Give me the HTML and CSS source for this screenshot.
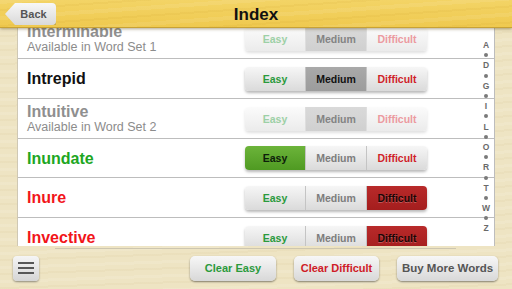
FILE: index.html
```html
<!DOCTYPE html>
<html>
<head>
<meta charset="utf-8">
<link rel="stylesheet" href="styles.css">
</head>
<body>
<div class="app">
  <header class="topbar">
    <div class="back"><span>Back</span></div>
    <h1 class="title">Index</h1>
  </header>
  <main class="main">
    <div class="panel">
      <ul class="list">
        <li class="row disabled">
          <div class="label"><div class="word">Interminable</div><div class="sub">Available in Word Set 1</div></div>
          <div class="seg"><span class="s easy">Easy</span><span class="s med on">Medium</span><span class="s diff">Difficult</span></div>
        </li>
        <li class="row">
          <div class="label"><div class="word">Intrepid</div></div>
          <div class="seg"><span class="s easy">Easy</span><span class="s med on">Medium</span><span class="s diff">Difficult</span></div>
        </li>
        <li class="row disabled">
          <div class="label"><div class="word">Intuitive</div><div class="sub">Available in Word Set 2</div></div>
          <div class="seg"><span class="s easy">Easy</span><span class="s med on">Medium</span><span class="s diff">Difficult</span></div>
        </li>
        <li class="row">
          <div class="label"><div class="word green">Inundate</div></div>
          <div class="seg"><span class="s easy on">Easy</span><span class="s med">Medium</span><span class="s diff">Difficult</span></div>
        </li>
        <li class="row">
          <div class="label"><div class="word red">Inure</div></div>
          <div class="seg"><span class="s easy">Easy</span><span class="s med">Medium</span><span class="s diff on">Difficult</span></div>
        </li>
        <li class="row">
          <div class="label"><div class="word red">Invective</div></div>
          <div class="seg"><span class="s easy">Easy</span><span class="s med">Medium</span><span class="s diff on">Difficult</span></div>
        </li>
      </ul>
      <div class="index">
        <span>A</span><i></i><span>D</span><i></i><span>G</span><i></i><span>I</span><i></i><span>L</span><i></i><span>O</span><i></i><span>R</span><i></i><span>T</span><i></i><span>W</span><i></i><span>Z</span>
      </div>
    </div>
  </main>
  <footer class="toolbar">
    <div class="menu"><i></i><i></i><i></i></div>
    <div class="actions">
      <div class="btn clear-easy">Clear Easy</div>
      <div class="btn clear-diff">Clear Difficult</div>
      <div class="btn buy">Buy More Words</div>
    </div>
  </footer>
</div>
</body>
</html>
```
FILE: styles.css
```css
* { box-sizing: border-box; }
html, body { margin: 0; padding: 0; }
body {
  width: 512px;
  height: 289px;
  overflow: hidden;
  font-family: "Liberation Sans", Arial, sans-serif;
  background: #ede3c2;
}
.app {
  position: relative;
  width: 512px;
  height: 289px;
  display: flex;
  flex-direction: column;
  background:
    repeating-linear-gradient(178deg, rgba(255,255,255,0.10) 0 3px, rgba(0,0,0,0.0) 3px 7px, rgba(180,150,80,0.06) 7px 9px, rgba(0,0,0,0) 9px 14px),
    #eee4c3;
}
.topbar {
  position: relative;
  z-index: 2;
  height: 28px;
  flex: none;
  display: flex;
  align-items: center;
  justify-content: center;
  background:
    repeating-linear-gradient(176deg, rgba(255,255,255,0.08) 0 4px, rgba(0,0,0,0) 4px 9px, rgba(190,140,20,0.08) 9px 11px, rgba(0,0,0,0) 11px 16px),
    linear-gradient(#f3d466, #efc94f);
  border-bottom: 1px solid #c8a235;
  box-shadow: 0 1px 3px rgba(80,60,0,0.45);
}
.title {
  margin: 0;
  font-size: 17px;
  font-weight: bold;
  color: #111;
  line-height: 20px;
  padding-top: 2px;
}
.back {
  position: absolute;
  left: 5px;
  top: 3px;
  width: 51px;
  height: 22px;
  display: flex;
  align-items: center;
  justify-content: center;
  padding-left: 6px;
  background: linear-gradient(#f7f7f7, #d9d9d9);
  border-radius: 4px;
  clip-path: polygon(10px 0, 100% 0, 100% 100%, 10px 100%, 0 50%);
  box-shadow: 0 1px 2px rgba(0,0,0,0.4);
}
.back span {
  font-size: 11px;
  font-weight: bold;
  color: #555;
}
.main {
  flex: none;
  height: 218px;
  padding: 0 17px 0 17px;
  position: relative;
}
.panel {
  position: relative;
  height: 218px;
  background: #fff;
  border-left: 1px solid #cfc8b4;
  border-right: 1px solid #bdbdbd;
  overflow: hidden;
}
.list {
  list-style: none;
  margin: -9px 0 0 0;
  padding: 0;
}
.row {
  height: 40px;
  display: flex;
  align-items: center;
  padding-left: 9px;
  border-bottom: 1px solid #bdbdbd;
}
.row:nth-child(4) { height: 39px; }
.label { width: 218px; flex: none; }
.word {
  font-size: 16px;
  font-weight: bold;
  line-height: 17px;
  color: #111;
}
.sub {
  font-size: 12.5px;
  line-height: 15px;
  color: #8c8c8c;
}
.disabled .word { color: #8f8f8f; }
.word.green { color: #20a61f; }
.word.red { color: #f2151a; }
.seg {
  display: flex;
  width: 182px;
  height: 24px;
  border-radius: 4px;
  overflow: hidden;
  box-shadow: 0 2px 3px rgba(0,0,0,0.28);
}
.s {
  flex: 1;
  display: flex;
  align-items: center;
  justify-content: center;
  font-size: 10.5px;
  font-weight: bold;
  background: linear-gradient(#f6f6f6, #dadada);
  border-left: 1px solid #c4c4c4;
}
.s:first-child { border-left: none; }
.s.easy { color: #2b9a3c; }
.s.med { color: #7d7d7d; }
.s.diff { color: #d01f2a; }
.s.med.on { background: linear-gradient(#a9a9a9, #9c9c9c); color: #111; }
.s.easy.on { background: linear-gradient(#6cb43a, #4f9a22); color: #0d200a; }
.s.diff.on { background: linear-gradient(#b82a2a, #a41e1e); color: #1a0505; text-shadow: 0 1px 0 rgba(255,255,255,0.25); }
.disabled .seg { box-shadow: 0 2px 3px rgba(0,0,0,0.12); }
.disabled .s { background: linear-gradient(#fbfbfb, #ebebeb); border-left-color: #dedede; }
.disabled .s.easy { color: #9dd0a6; }
.disabled .s.diff { color: #ec9aa0; }
.disabled .s.med.on { background: linear-gradient(#d9d9d9, #d0d0d0); color: #838383; }
.index {
  position: absolute;
  right: 0;
  top: 12px;
  width: 16px;
  display: flex;
  flex-direction: column;
  align-items: center;
}
.index span {
  height: 10.2px;
  font-size: 8.5px;
  line-height: 10px;
  font-weight: bold;
  color: #6a6a6a;
}
.index i {
  display: flex;
  height: 10.2px;
  width: 6px;
  align-items: center;
  justify-content: center;
}
.index i::before {
  content: "";
  width: 4px;
  height: 4px;
  border-radius: 50%;
  background: #7a7a7a;
}
.toolbar {
  flex: 1;
  display: flex;
  align-items: center;
  justify-content: space-between;
  padding: 1px 14px 0 13px;
  position: relative;
}
.toolbar::before {
  content: "";
  position: absolute;
  left: 55px;
  width: 401px;
  top: 2px;
  height: 1px;
  background: #cdc6b0;
}
.menu {
  width: 26px;
  height: 25px;
  border-radius: 4px;
  background: linear-gradient(#f5f5f5, #d5d5d5);
  box-shadow: 0 1px 2px rgba(0,0,0,0.4);
  display: flex;
  flex-direction: column;
  align-items: center;
  justify-content: center;
  gap: 3px;
}
.menu i {
  display: block;
  width: 16px;
  height: 2px;
  background: #575757;
}
.actions {
  display: flex;
  gap: 18px;
  align-items: center;
}
.btn {
  height: 25px;
  display: flex;
  align-items: center;
  justify-content: center;
  border-radius: 5px;
  background: linear-gradient(#f7f7f7, #d8d8d8);
  box-shadow: 0 1px 2px rgba(0,0,0,0.45);
  font-size: 11px;
  font-weight: bold;
}
.clear-easy { width: 86px; color: #2b9a3c; }
.clear-diff { width: 85px; color: #cf1b27; }
.buy { width: 101px; color: #555; font-size: 11.5px; }
```
